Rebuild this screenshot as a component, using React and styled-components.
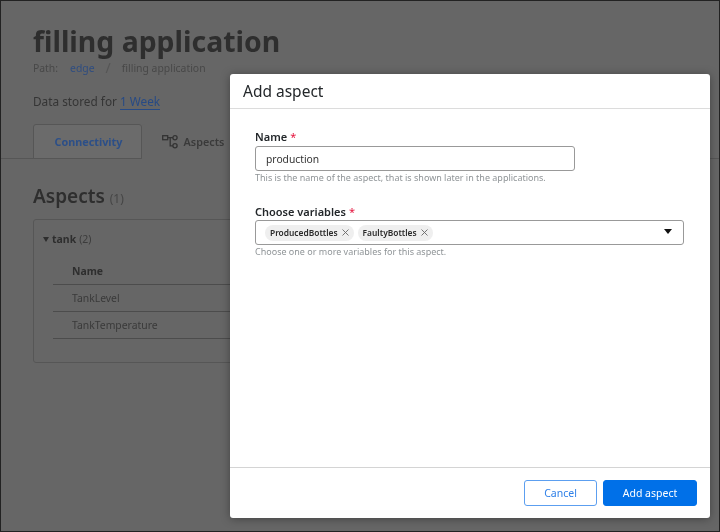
import React from "react";
import styled, { createGlobalStyle } from "styled-components";

const Global = createGlobalStyle`
  html, body { margin: 0; padding: 0; width: 720px; height: 532px; overflow: hidden; background: #666; }
  * { box-sizing: border-box; }
  body { font-family: "Noto Sans", "Open Sans", sans-serif; }
`;
const Frame = styled.div`
  position: relative; width: 720px; height: 532px; overflow: hidden;
  background: #666; border: 1px solid #222; filter: blur(0.3px);
`;
const Page = styled.div`
  display: flex; flex-direction: column; height: 100%; padding-top: 22px; color: #333;
`;
const Head = styled.div`display: flex; flex-direction: column; padding-left: 32px;`;
const Title = styled.h1`
  margin: 0; font-size: 28.4px; line-height: 36px; font-weight: 700; color: #2e2e2e;
`;
const Crumbs = styled.div`
  display: flex; align-items: center; font-size: 10.4px; line-height: 16px; margin-top: 1px; color: #484848;
`;
const CrumbLink = styled.span`color: #2f4d80; margin-left: 12px;`;
const CrumbSep = styled.span`margin: 0 11px 0 11px; color: #555; font-size: 14px;`;
const Stored = styled.div`
  margin-top: 16px; font-size: 11.8px; line-height: 18px; color: #353535;
`;
const StoredLink = styled.span`color: #274a85; border-bottom: 1px solid #274a85;`;
const Tabs = styled.div`
  display: flex; margin-top: 14px; height: 35px; padding-left: 32px; border-bottom: 1px solid #565656;
`;
const Tab = styled.div`
  display: flex; align-items: center; justify-content: center; gap: 5px;
  width: ${p => p.$w}px; height: 35px; font-size: 10.8px; font-weight: ${p => p.$active ? 600 : 700};
  padding-left: ${p => p.$active ? 0 : 2}px;
  color: ${p => p.$active ? "#3a3a3a" : "#2c4f88"};
  background: ${p => p.$active ? "#666" : "#6b6b6b"};
  border: ${p => p.$active ? "none" : "1px solid #565656"};
  border-radius: 3px 3px 0 0;
`;
const Section = styled.div`padding: 24px 0 0 32px;`;
const SectionTitle = styled.h2`
  margin: 0; font-size: 19px; line-height: 26px; font-weight: 600; color: #2e2e2e;
`;
const Count = styled.span`font-size: 12px; font-weight: 400; color: #454545;`;
const Card = styled.div`
  margin-top: 7px; width: 400px; height: 144px; border: 1px solid #565656; border-radius: 3px;
  padding: 10px 0 0 9px;
`;
const GroupHead = styled.div`
  display: flex; align-items: center; gap: 3px; height: 18px; font-size: 10.5px; font-weight: 700; color: #2e2e2e;
`;
const Caret = styled.span`
  width: 0; height: 0; border-left: 3px solid transparent; border-right: 3px solid transparent;
  border-top: 5px solid #2e2e2e;
`;
const GroupCount = styled.span`font-weight: 400; color: #3c3c3c;`;
const Row = styled.div`
  display: flex; align-items: center; margin: 0 0 0 10px; padding-left: 19px; height: 27px;
  font-size: 10.4px; font-weight: ${p => p.$head ? 700 : 400}; border-bottom: 1px solid #4c4c4c;
  color: ${p => p.$head ? "#2e2e2e" : "#3a3a3a"};
`;
const RowList = styled.div`margin-top: 10px;`;

const Modal = styled.div`
  position: absolute; left: 229px; top: 73px; width: 480px; height: 444px;
  background: #fff; border-radius: 3px; display: flex; flex-direction: column;
  box-shadow: 0 1px 10px rgba(0,0,0,.35);
`;
const ModalHead = styled.div`
  height: 35px; flex: none; display: flex; align-items: center; padding-left: 13px;
  border-bottom: 1px solid #dcdcdc; font-size: 15.5px; color: #23272a;
`;
const ModalBody = styled.div`flex: 1; padding: 20px 25px 0 25px;`;
const Field = styled.div`margin-bottom: 19px;`;
const Label = styled.div`
  font-size: 11px; line-height: 16px; font-weight: 600; color: #23272a;
`;
const Req = styled.span`color: #e5163f; margin-left: 3px; font-weight: 400;`;
const Input = styled.div`
  width: 320px; height: 25px; margin-top: 1px; border: 1px solid #999; border-radius: 3px;
  display: flex; align-items: center; padding-left: 10px; font-size: 10.3px; color: #333;
`;
const Select = styled.div`
  width: 429px; height: 25px; border: 1px solid #999; border-radius: 3px;
  display: flex; align-items: center; gap: 4px; padding: 0 11px 0 9px;
`;
const Chip = styled.div`
  display: flex; align-items: center; gap: 4px; height: 16px; padding: 0 5px; border-radius: 9px;
  background: #efefef; font-size: 8.4px; font-weight: 600; color: #2a2a2a;
`;
const Arrow = styled.span`
  margin: -2px 0 0 auto; width: 0; height: 0; border-left: 4px solid transparent; border-right: 4px solid transparent;
  border-top: 5px solid #111;
`;
const Help = styled.div`font-size: 9px; line-height: 14px; color: #8f9497;`;
const ModalFoot = styled.div`
  height: 51px; flex: none; display: flex; justify-content: flex-end; align-items: center; gap: 6px;
  padding: 0 13px 0 0; border-top: 1px solid #d4d4d4;
`;
const Button = styled.button`
  width: ${p => p.$w}px; height: 26px; border-radius: 3px; font: 400 10.5px "Noto Sans", sans-serif; padding: 0 0 1px;
  border: 1px solid ${p => p.$primary ? "#0070e8" : "#5c9ff0"};
  background: ${p => p.$primary ? "#0070e8" : "#fff"};
  color: ${p => p.$primary ? "#fff" : "#2f80e8"};
`;

const X = () => (
  <svg width="7" height="7" viewBox="0 0 7 7" fill="none" stroke="#666" strokeWidth="0.9"><path d="M.5.5l6 6M6.5.5l-6 6" /></svg>
);
const FlowIcon = () => (
  <svg width="17" height="15" viewBox="0 0 17 15" fill="none" stroke="#333" strokeWidth="1.3">
    <rect x="0.7" y="1.7" width="5" height="4" />
    <circle cx="13" cy="3.7" r="2.1" />
    <circle cx="13" cy="11.8" r="2.1" />
    <path d="M5.7 3.7h5.2M8.2 3.7v8.1h2.7" />
  </svg>
);

export default function App() {
  return (
    <Frame>
      <Global />
      <Page>
        <Head>
          <Title>filling application</Title>
          <Crumbs>Path:<CrumbLink>edge</CrumbLink><CrumbSep>/</CrumbSep>filling application</Crumbs>
          <Stored>Data stored for <StoredLink>1 Week</StoredLink></Stored>
        </Head>
        <Tabs>
          <Tab $w={109}>Connectivity</Tab>
          <Tab $w={102} $active><FlowIcon />Aspects</Tab>
        </Tabs>
        <Section>
          <SectionTitle>Aspects <Count>(1)</Count></SectionTitle>
          <Card>
            <GroupHead><Caret />tank <GroupCount>(2)</GroupCount></GroupHead>
            <RowList>
              <Row $head>Name</Row>
              <Row>TankLevel</Row>
              <Row>TankTemperature</Row>
            </RowList>
          </Card>
        </Section>
      </Page>
      <Modal>
        <ModalHead>Add aspect</ModalHead>
        <ModalBody>
          <Field>
            <Label>Name<Req>*</Req></Label>
            <Input>production</Input>
            <Help>This is the name of the aspect, that is shown later in the applications.</Help>
          </Field>
          <Field>
            <Label>Choose variables<Req>*</Req></Label>
            <Select>
              <Chip>ProducedBottles <X /></Chip>
              <Chip>FaultyBottles <X /></Chip>
              <Arrow />
            </Select>
            <Help>Choose one or more variables for this aspect.</Help>
          </Field>
        </ModalBody>
        <ModalFoot>
          <Button $w={73}>Cancel</Button>
          <Button $w={94} $primary>Add aspect</Button>
        </ModalFoot>
      </Modal>
    </Frame>
  );
}
